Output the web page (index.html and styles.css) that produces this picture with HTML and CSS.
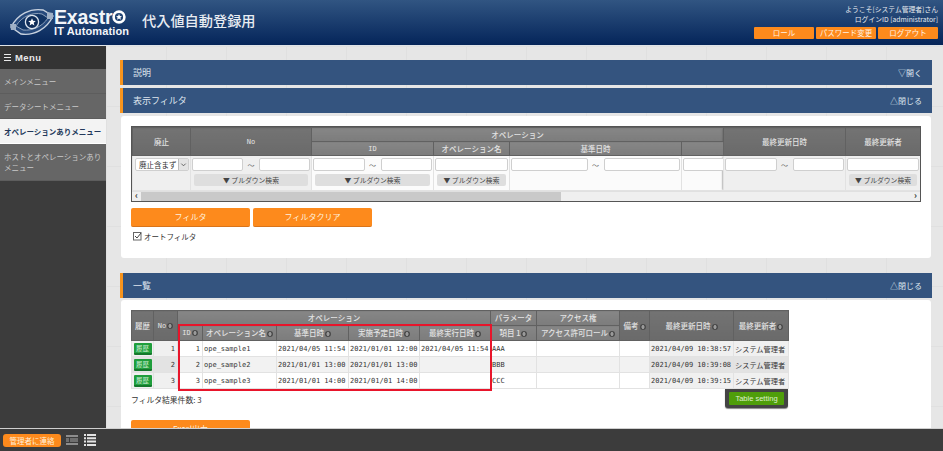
FILE: index.html
```html
<!DOCTYPE html>
<html lang="ja">
<head>
<meta charset="utf-8">
<title>代入値自動登録用</title>
<link rel="stylesheet" href="styles.css">
</head>
<body>
<svg class="defs" width="0" height="0" aria-hidden="true">
  <symbol id="sort" viewBox="0 0 10 10">
    <circle cx="5" cy="5" r="5" fill="#4a4a4a"/>
    <path d="M5 1.200 8 4.400H2z M5 8.800 2 5.600H8z" fill="#b5b5b5"/>
  </symbol>
</svg>
<header class="top">
  <div class="brand">
    <svg class="eye" viewBox="0 0 44 28" width="44" height="28">
      <path d="M1 19 C8 6 20 0 33 2 L43 8 C37 21 24 28 11 26 Z" fill="#26497c" stroke="#c6d0de" stroke-width="1.400"/>
      <path d="M6 18 C12 8 23 4 32 6 L38 10 C32 19 22 23 13 22 Z" fill="#123464" stroke="#8ea2bd" stroke-width="1"/>
      <circle cx="22" cy="14" r="6.600" fill="#0d2b58" stroke="#dfe6ef" stroke-width="1.300"/>
      <path d="M22 10.200l1.100 2.500 2.700.2-2.100 1.800.7 2.700-2.400-1.500-2.400 1.500.7-2.700-2.100-1.800 2.700-.2z" fill="#fff"/>
      <path d="M0 16h6v6H1zM37 4l6 1v6h-6z" fill="#9fb0c6"/>
    </svg>
    <div class="wordmark">
      <div class="word1">Exastr<svg class="ostar" viewBox="0 0 14 14" width="14" height="14"><circle cx="7" cy="7" r="5.400" fill="none" stroke="#fff" stroke-width="2.600"/><path d="M7 4l.9 2 2.100.2-1.600 1.400.5 2.100L7 8.600 5.100 9.700l.5-2.100L4 6.200 6.100 6z" fill="#fff"/></svg></div>
      <div class="word2">IT Automation</div>
    </div>
  </div>
  <h1 class="title">代入値自動登録用</h1>
  <div class="user">
    <div class="user-line">ようこそ[システム管理者]さん</div>
    <div class="user-line">ログインID [administrator]</div>
    <div class="user-btns">
      <a class="ubtn">ロール</a><a class="ubtn">パスワード変更</a><a class="ubtn">ログアウト</a>
    </div>
  </div>
</header>

<div class="middle">
  <nav class="side">
    <div class="menu-head"><span class="burger"><i></i><i></i><i></i></span>Menu</div>
    <a class="item">メインメニュー</a>
    <a class="item">データシートメニュー</a>
    <a class="item active">オペレーションありメニュー</a>
    <a class="item tall">ホストとオペレーションありメニュー</a>
  </nav>

  <main class="main">
    <div class="bar"><span>説明</span><span class="tog">▽開く</span></div>
    <div class="bar second"><span>表示フィルタ</span><span class="tog">△閉じる</span></div>
    <section class="card filter-card">
      <div class="ftable">
        <table class="filter">
          <colgroup><col class="f1"><col class="f2"><col class="f3"><col class="f4"><col class="f5"><col class="f6"><col class="f7"><col class="f8"></colgroup>
          <tr class="fh1">
            <th rowspan="2" class="dk">廃止</th>
            <th rowspan="2" class="dk mono">No</th>
            <th colspan="4" class="lt">オペレーション</th>
            <th rowspan="2" class="dk fixl">最終更新日時</th>
            <th rowspan="2" class="dk">最終更新者</th>
          </tr>
          <tr class="fh2">
            <th class="lt mono">ID</th>
            <th class="lt">オペレーション名</th>
            <th class="lt">基準日時</th>
            <th class="lt"></th>
          </tr>
          <tr class="frow">
            <td class="gr"><div class="sel"><span>廃止含まず</span><b><svg viewBox="0 0 8 8" width="7" height="7"><path d="M1.500 3 4 5.500 6.500 3" fill="none" stroke="#555" stroke-width="1"/></svg></b></div></td>
            <td class="gr"><div class="rng"><input class="in"><span>～</span><input class="in"></div><div class="pull">▼ プルダウン検索</div></td>
            <td><div class="rng"><input class="in"><span>～</span><input class="in"></div><div class="pull">▼ プルダウン検索</div></td>
            <td><div class="rng"><input class="in"></div><div class="pull">▼ プルダウン検索</div></td>
            <td><div class="rng"><input class="in"><span>～</span><input class="in"></div></td>
            <td class="cut"><div class="rng clip"><input class="in"></div></td>
            <td class="gr fixl"><div class="rng"><input class="in"><span>～</span><input class="in"></div></td>
            <td class="gr"><div class="rng"><input class="in"></div><div class="pull">▼ プルダウン検索</div></td>
          </tr>
        </table>
        <div class="sbar"><span class="arr">‹</span><div class="thumb"></div><span class="arr right">›</span></div>
      </div>
      <div class="fbtns"><a class="obtn">フィルタ</a><a class="obtn">フィルタクリア</a></div>
      <label class="auto"><svg viewBox="0 0 9 9" width="9" height="9"><rect x=".5" y=".5" width="7.500" height="7.500" fill="#fff" stroke="#666"/><path d="M2 4l2 2 4-5" fill="none" stroke="#444" stroke-width="1"/></svg>オートフィルタ</label>
    </section>

    <div class="bar third"><span>一覧</span><span class="tog">△閉じる</span></div>
    <section class="card list-card">
      <div class="lwrap">
        <table class="list">
          <colgroup><col class="l1"><col class="l2"><col class="l3"><col class="l4"><col class="l5"><col class="l6"><col class="l7"><col class="l8"><col class="l9"><col class="l10"><col class="l11"><col class="l12"></colgroup>
          <tr class="lh1">
            <th rowspan="2" class="dk">履歴</th>
            <th rowspan="2" class="dk mono">No<svg class="s"><use href="#sort"/></svg></th>
            <th colspan="5" class="lt">オペレーション</th>
            <th class="lt">パラメータ</th>
            <th class="lt">アクセス権</th>
            <th rowspan="2" class="dk">備考<svg class="s"><use href="#sort"/></svg></th>
            <th rowspan="2" class="dk">最終更新日時<svg class="s"><use href="#sort"/></svg></th>
            <th rowspan="2" class="dk">最終更新者<svg class="s"><use href="#sort"/></svg></th>
          </tr>
          <tr class="lh2">
            <th class="lt mono">ID<svg class="s"><use href="#sort"/></svg></th>
            <th class="lt">オペレーション名<svg class="s"><use href="#sort"/></svg></th>
            <th class="lt">基準日時<svg class="s"><use href="#sort"/></svg></th>
            <th class="lt">実施予定日時<svg class="s"><use href="#sort"/></svg></th>
            <th class="lt">最終実行日時<svg class="s"><use href="#sort"/></svg></th>
            <th class="lt">項目 1<svg class="s"><use href="#sort"/></svg></th>
            <th class="lt">アクセス許可ロール<svg class="s"><use href="#sort"/></svg></th>
          </tr>
          <tr>
            <td class="gr ctr"><a class="hist">履歴</a></td><td class="gr num">1</td><td class="num">1</td><td class="m">ope_sample1</td><td class="m">2021/04/05 11:54</td><td class="m">2021/01/01 12:00</td><td class="m">2021/04/05 11:54</td><td class="m">AAA</td><td></td><td></td><td class="gr m">2021/04/09 10:38:57</td><td class="gr who">システム管理者</td>
          </tr>
          <tr class="even">
            <td class="gr2 ctr"><a class="hist">履歴</a></td><td class="gr2 num">2</td><td class="num">2</td><td class="m">ope_sample2</td><td class="m">2021/01/01 13:00</td><td class="m">2021/01/01 13:00</td><td></td><td class="m">BBB</td><td></td><td></td><td class="gr2 m">2021/04/09 10:39:08</td><td class="gr2 who">システム管理者</td>
          </tr>
          <tr>
            <td class="gr ctr"><a class="hist">履歴</a></td><td class="gr num">3</td><td class="num">3</td><td class="m">ope_sample3</td><td class="m">2021/01/01 14:00</td><td class="m">2021/01/01 14:00</td><td></td><td class="m">CCC</td><td></td><td></td><td class="gr m">2021/04/09 10:39:15</td><td class="gr who">システム管理者</td>
          </tr>
        </table>
        <div class="redbox"></div>
        <div class="tset"><a class="tset-btn">Table setting</a></div>
      </div>
      <p class="count">フィルタ結果件数: 3</p>
      <a class="obtn">Excel出力</a>
    </section>
  </main>
</div>

<footer class="foot">
  <a class="contact">管理者に連絡</a>
  <svg class="ficon" viewBox="0 0 12 12" width="12" height="12"><path d="M0 1h12v2H0zM0 9h12v2H0z" fill="#8d8d8d"/><path d="M0 4h3v4H0zM4 4h8v4H4z" fill="#6f6f6f"/></svg>
  <svg class="ficon" viewBox="0 0 12 12" width="12" height="12"><path d="M0 0h2v2H0zM3 0h9v2H3zM0 3.300h2v2H0zM3 3.300h9v2H3zM0 6.600h2v2H0zM3 6.600h9v2H3zM0 9.900h2v2H0zM3 9.900h9v2H3z" fill="#e4e4e4"/></svg>
</footer>
</body>
</html>
```

FILE: styles.css
```css
* { box-sizing: border-box; }
html, body { margin: 0; height: 100%; }
body {
  width: 943px; height: 451px; overflow: hidden;
  display: flex; flex-direction: column;
  font-family: "Noto Sans CJK JP", "Liberation Sans", sans-serif;
  font-size: 7.5px; color: #333; background: #e5e5e5;
}
.defs { position: absolute; }
a { display: block; text-decoration: none; }
p, h1 { margin: 0; }

/* header */
.top {
  flex: 0 0 46px; display: flex; align-items: flex-start;
  background: linear-gradient(#315582, #0b2c60 85%, #062558);
  border-bottom: 1px solid #dfe3e8; color: #fff;
}
.brand { display: flex; width: 142px; padding: 8px 0 0 10px; }
.eye { flex: none; }
.wordmark { color: #f2f5f9; font-family: "Liberation Sans", sans-serif; font-weight: 700; }
.word1 { font-size: 19.500px; line-height: 18px; display: flex; align-items: center; letter-spacing: -.2px; }
.word2 { font-size: 11px; line-height: 10px; letter-spacing: .12px; }
.title { font-size: 14.200px; font-weight: 500; line-height: 16px; margin-top: 12px; color: #e8ecf2; }
.user { margin-left: auto; padding: 4px 5px 0 0; text-align: right; }
.user-line { font-size: 6.800px; line-height: 10px; color: #e6e9ee; }
.user-btns { display: flex; gap: 2px; margin-top: 3px; }
.ubtn {
  width: 60px; height: 12px; line-height: 12px; text-align: center;
  background: #fd8a1c; color: #fff3e2; font-size: 7.500px; border-radius: 1px;
}

/* middle */
.middle { flex: 1; min-height: 0; display: flex; }
.side { flex: 0 0 106px; background: #3c3c3c; color: #cfcfcf; }
.menu-head {
  height: 23px; display: flex; align-items: center; gap: 4px; padding-left: 4px;
  background: #343434; color: #e9e9e9;
  font: 700 9.500px "Liberation Sans", sans-serif; letter-spacing: .4px;
}
.burger { display: flex; flex-direction: column; gap: 2px; width: 7px; }
.burger i { display: block; height: 1px; background: #e9e9e9; }
.item {
  height: 25px; line-height: 25px; padding: 0 4px; background: #666; color: #c9c9c9;
  border-bottom: 1px solid #5d5d5d;
}
.item.active { background: #f3f3f3; color: #23395b; font-weight: 700; border-bottom-color: #fff; }
.item.tall { height: 37px; line-height: 11px; padding-top: 7px; }

.main {
  flex: 1; min-width: 0; overflow: hidden; padding: 14px 11px 0 14px;
  background-color: #e6e6e6;
  background-image:
    linear-gradient(90deg, #e0e0e0 1px, transparent 1px),
    linear-gradient(#e0e0e0 1px, transparent 1px);
  background-size: 60px 60px;
}
.bar {
  height: 25px; display: flex; justify-content: space-between; align-items: center;
  padding: 0 10px 0 10px;
  background: #34547f; border-left: 3px solid #f7941d;
  color: #dfe5ee; font-size: 9px;
}
.tog { font-size: 8px; }
.bar.second { margin-top: 3px; }
.bar.third { margin-top: 15px; }
.card { background: #fff; margin-left: 1px; margin-right: 1px; border-radius: 3px; padding: 10px; }
.filter-card { margin-top: 3px; height: 142px; }
.list-card { margin-top: 2px; height: 200px; overflow: hidden; }

/* filter table */
.ftable { border: 1px solid #555; width: 790px; overflow: hidden; }
table { border-collapse: collapse; table-layout: fixed; }
.filter { width: 788px; }
.f1 { width: 58px; } .f2 { width: 121px; } .f3 { width: 122px; } .f4 { width: 76px; }
.f5 { width: 172px; } .f6 { width: 42px; } .f7 { width: 122px; } .f8 { width: 75px; }
th {
  font-weight: 500; color: #e2e2e2; text-align: center; padding: 0; line-height: 10px;
  border: 1px solid #616161; white-space: nowrap;
}
th.dk { background: linear-gradient(#737373, #6a6a6a); }
th.lt { background: linear-gradient(#868686, #7c7c7c); }
.mono { font-family: "DejaVu Sans Mono", monospace; font-size: 7px; }
.fh1 { height: 14px; } .fh2 { height: 14px; }
.frow { height: 35px; }
.filter td { vertical-align: top; padding: 2px 1px 0; border: 1px solid #e2e2e2; background: #fbfbfb; }
.filter td.gr { background: #efefef; }
.filter td.cut { overflow: hidden; padding-right: 0; }
.fixl { box-shadow: -2px 0 2px -1px #555; border-left: 1px solid #666 !important; }
.rng { display: flex; align-items: center; height: 13px; color: #666; font-size: 7px; }
.rng span { flex: 0 0 16px; text-align: center; }
.in { flex: 1; min-width: 0; width: 10px; height: 13px; padding: 0; border: 1px solid #cfcfcf; border-radius: 2px; background: #fff; }
.clip { margin-right: -6px; }
.sel {
  display: flex; height: 13px; margin: 0 1px; width: 54px; line-height: 11px;
  border: 1px solid #cfcfcf; border-radius: 2px; background: #fff; color: #333;
}
.sel span { flex: 1; padding-left: 3px; white-space: nowrap; }
.sel b { flex: 0 0 10px; background: #e4e4e4; border-left: 1px solid #bbb; display: flex; align-items: center; justify-content: center; }
.pull {
  height: 12px; line-height: 12px; margin: 3px 2px 0; text-align: center;
  background: #dedede; border-radius: 2px; color: #444; font-size: 6.800px; white-space: nowrap;
}
.sbar { height: 10px; background: #efefef; position: relative; border-top: 1px solid #e0e0e0; display: flex; }
.thumb { position: absolute; left: 9px; top: 0; bottom: 0; width: 420px; background: #c9c9c9; }
.arr { width: 9px; line-height: 8px; font-size: 9px; font-weight: 700; color: #333; text-align: center; }
.arr.right { margin-left: auto; }

.fbtns { display: flex; gap: 3px; margin-top: 6px; }
.obtn {
  width: 119px; height: 19px; line-height: 18px; text-align: center;
  background: #fd8a1c; color: #fff1de; font-size: 8px; border-radius: 2px;
  border-bottom: 1px solid #d9741a;
}
.auto { display: flex; align-items: center; gap: 2px; margin: 5px 0 0 2px; line-height: 9px; color: #333; font-size: 7.500px; }

/* list */
.lwrap { position: relative; width: 657px; }
.list { width: 657px; border: 1px solid #666; }
.l1 { width: 22px; } .l2 { width: 24px; } .l3 { width: 25px; } .l4 { width: 74px; }
.l5 { width: 72px; } .l6 { width: 71px; } .l7 { width: 71px; } .l8 { width: 46px; }
.l9 { width: 83px; } .l10 { width: 30px; } .l11 { width: 84px; } .l12 { width: 55px; }
.list tr { height: 16px; }
.list tr.lh1 { height: 15px; }
.list tr.lh2 { height: 15px; }
.list td { border: 1px solid #e2e2e2; background: #fff; padding: 0 1px; white-space: nowrap; overflow: hidden; line-height: 10px; }
.list tr.even td { background: #f2f2f2; }
.list td.gr { background: #f0f0f0; }
.list tr.even td.gr2 { background: #e3e3e3; }
.m { font-family: "DejaVu Sans Mono", monospace; font-size: 7px; color: #333; }
.num { font-family: "DejaVu Sans Mono", monospace; font-size: 7px; text-align: right; padding-right: 2px !important; }
.ctr { text-align: center; padding: 0 !important; }
.who { font-size: 7.200px; }
.s { width: 6px; height: 6px; margin-left: 1px; vertical-align: -1px; }
.hist {
  width: 18px; height: 12px; line-height: 10px; margin: 1px auto; text-align: center;
  background: #1f9e3c; border-bottom: 2px solid #15782c; color: #c8ecd2; font-size: 6.500px; border-radius: 1px;
}
.redbox { position: absolute; left: 47px; top: 14px; width: 314px; height: 67px; border: 2px solid #e8152b; }
.tset {
  position: absolute; right: 0; top: 79px; width: 63px; height: 19px; padding: 3px 4px;
  background: #444; border-radius: 0 0 3px 3px; box-shadow: 0 1px 1px #888;
}
.tset-btn {
  height: 13px; text-align: center; background: #4f9e0a; color: #dff0cd;
  font: 7.500px/13px "Liberation Sans", sans-serif; border-radius: 1px;
}
.count { margin-top: 6px; line-height: 10px; font-size: 7.800px; }
.list-card .obtn { margin-top: 15px; }

/* footer */
.foot {
  flex: 0 0 23px; display: flex; align-items: center; gap: 6px; padding: 0 0 0 3px;
  background: #3c3c3c; border-top: 1px solid #cfcfcf;
}
.contact {
  width: 58px; height: 13px; line-height: 13px; text-align: center;
  background: #fd8a1c; color: #fff1de; border-radius: 3px; font-size: 7.500px; margin-right: -1px;
}
.ficon { flex: none; }
```
